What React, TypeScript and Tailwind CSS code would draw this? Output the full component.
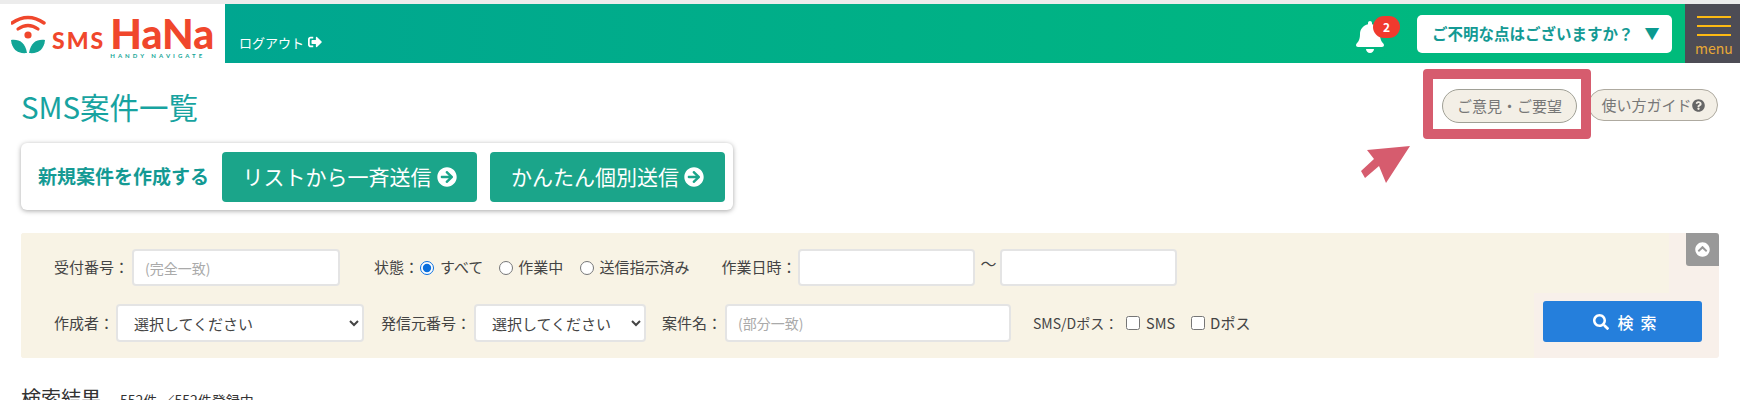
import {
  FaArrowCircleRight,
  FaBell,
  FaChevronCircleUp,
  FaQuestionCircle,
  FaSearch,
  FaSignOutAlt,
} from 'react-icons/fa';

const fontStack = "font-['Noto_Sans_CJK_JP','Noto_Sans',sans-serif]";

function Logo() {
  return (
    <div className="flex h-[59px] w-[225px] shrink-0 items-start bg-white pl-[11px] pt-[11px]">
      <svg width="36" height="40" viewBox="0 0 36 40">
        <path d="M1 8 Q17 -3 33 8" fill="none" stroke="#f0472c" strokeWidth="3.4" strokeLinecap="round" />
        <path d="M7 14 Q17 7 27 14" fill="none" stroke="#f0472c" strokeWidth="3.2" strokeLinecap="round" />
        <circle cx="17" cy="20" r="3.6" fill="#f0472c" />
        <path d="M0 25 C8 24 14 27 16 38 C7 39 1 35 0 25 Z" fill="#12a596" />
        <path d="M34 25 C26 24 20 27 18 38 C27 39 33 35 34 25 Z" fill="#12a596" />
      </svg>
      <div className="ml-[5px] mt-[12px] font-['Lato',sans-serif] text-[23px] font-black leading-[26px] tracking-[2px] text-[#f0472c]">
        SMS
      </div>
      <div className="ml-[5px] flex flex-col">
        <div className="flex h-[37px] items-center font-['Lato',sans-serif] text-[41px] font-black leading-[37px] text-[#f0472c]">
          HaNa
        </div>
        <div className="font-['Lato',sans-serif] text-[6px] font-bold leading-[8px] tracking-[3.05px] text-[#12a596]">
          HANDY NAVIGATE
        </div>
      </div>
    </div>
  );
}

function Header() {
  return (
    <div className="flex h-[59px] items-stretch">
      <Logo />
      <div className="flex flex-1 bg-gradient-to-r from-[#00a690] to-[#00bc7a]">
        <div className="flex items-end pb-[10px] pl-[14px] text-[13px] leading-[20px] text-white">
          ログアウト
          <FaSignOutAlt className="mb-[4px] ml-[4px] h-[14px] w-[14px]" />
        </div>
        <div className="ml-auto flex items-center pr-[13px]">
          <div className="relative mr-[33px] mt-[7px] h-[32px] w-[28px]">
            <FaBell className="h-[32px] w-[28px] text-white" />
            <div className="absolute left-[17px] top-[-5px] flex h-[22px] w-[27px] items-center justify-center rounded-full bg-[#f03a2e] text-[12px] font-bold text-white">
              2
            </div>
          </div>
          <div className="flex h-[38px] w-[255px] items-center rounded-[5px] bg-white pl-[15px] text-[15.5px] font-bold text-[#149a94]">
            ご不明な点はございますか？
            <span className="ml-[11px] text-[15px] text-[#0b9a90]">▼</span>
          </div>
        </div>
        <div className="flex w-[55px] flex-col items-center bg-[#4d4c55] pl-[3px] pt-[12px]">
          <div className="h-[2px] w-[34px] bg-[#fdb913]" />
          <div className="mt-[7px] h-[2px] w-[34px] bg-[#fdb913]" />
          <div className="mt-[7px] h-[2px] w-[34px] bg-[#fdb913]" />
          <div className="mt-[2px] text-[14px] leading-[20px] text-[#e8a836]">menu</div>
        </div>
      </div>
    </div>
  );
}

function TitleRow() {
  return (
    <div className="flex h-[60px] items-start justify-between pl-[21px] pr-[22px] pt-[26px]">
      <h1 className="text-[29.5px] font-normal leading-[34px] text-[#17a3a0]">SMS案件一覧</h1>
      <div className="flex items-start gap-[11px]">
        <div className="flex h-[34px] w-[135px] items-center justify-center rounded-full border-[1.5px] border-[#a0a096] bg-[#f3efe6] text-[15px] text-[#777]">
          ご意見・ご要望
        </div>
        <div className="flex h-[32px] w-[130px] items-center justify-center rounded-full border-[1.5px] border-[#aeaaa0] bg-[#f3efe6] text-[15px] text-[#777]">
          使い方ガイド
          <FaQuestionCircle className="h-[13px] w-[13px] text-[#666]" />
        </div>
      </div>
    </div>
  );
}

function CreateCard() {
  return (
    <div className="ml-[21px] mt-[20px] flex h-[67px] w-[712px] items-center rounded-[6px] bg-white pl-[17px] shadow-[0_1px_5px_rgba(0,0,0,0.35)]">
      <div className="w-[184px] whitespace-nowrap text-[19px] font-bold text-[#149a94]">新規案件を作成する</div>
      <div className="flex h-[50px] w-[255px] items-center justify-center gap-[5px] rounded-[4px] bg-[#1ba58a] text-[21px] text-white">
        リストから一斉送信
        <FaArrowCircleRight className="h-[20px] w-[20px]" />
      </div>
      <div className="ml-[13px] flex h-[50px] w-[235px] items-center justify-center gap-[5px] rounded-[4px] bg-[#1ba58a] text-[21px] text-white">
        かんたん個別送信
        <FaArrowCircleRight className="h-[20px] w-[20px]" />
      </div>
    </div>
  );
}

const fieldClass =
  'h-[37px] rounded-[4px] border-2 border-[#e4e4e4] bg-white pl-[11px] text-[14px] text-[#444] outline-none placeholder:text-[#aaa]';
const selectClass =
  'h-[38px] rounded-[4px] border-2 border-[#e4e4e4] bg-white pl-[12px] text-[15px] text-[#444] outline-none';

function SearchPanel() {
  return (
    <div className="relative ml-[21px] mt-[23px] h-[125px] w-[1698px] overflow-hidden rounded-[3px] bg-[#f8f0ea] text-[15px] text-[#444]">
      <div className="flex h-[60px] w-[1648px] items-center bg-[#f8f3e5] pl-[33px] pt-[9px]">
        <span className="w-[78px]">受付番号：</span>
        <input className={`${fieldClass} w-[208px]`} placeholder="(完全一致)" readOnly />
        <span className="ml-[34px] w-[46px]">状態：</span>
        <label className="flex items-center">
          <input type="radio" name="state" defaultChecked className="h-[14px] w-[14px] accent-[#0b6fdc]" />
          <span className="ml-[6px]">すべて</span>
        </label>
        <label className="ml-[16px] flex items-center">
          <input type="radio" name="state" className="h-[14px] w-[14px]" />
          <span className="ml-[5px]">作業中</span>
        </label>
        <label className="ml-[17px] flex items-center">
          <input type="radio" name="state" className="h-[14px] w-[14px]" />
          <span className="ml-[5px]">送信指示済み</span>
        </label>
        <span className="ml-[32px] w-[77px]">作業日時：</span>
        <input className={`${fieldClass} w-[177px]`} readOnly />
        <span className="mx-[5px] mt-[-10px] w-[15px] text-[16px]">〜</span>
        <input className={`${fieldClass} w-[177px]`} readOnly />
      </div>
      <div className="flex h-[65px]">
        <div className="flex h-full w-[1513px] items-start bg-[#f8f3e5] pl-[33px] pt-[11px]">
          <div className="flex h-[38px] items-center">
            <span className="w-[62px]">作成者：</span>
            <select className={`${selectClass} w-[248px]`} defaultValue="">
              <option value="">選択してください</option>
            </select>
            <span className="ml-[17px] w-[93px]">発信元番号：</span>
            <select className={`${selectClass} w-[172px]`} defaultValue="">
              <option value="">選択してください</option>
            </select>
            <span className="ml-[16px] w-[63px]">案件名：</span>
            <input className={`${fieldClass} h-[38px] w-[286px]`} placeholder="(部分一致)" readOnly />
            <span className="ml-[22px] w-[93px] text-[14px]">SMS/Dポス：</span>
            <label className="flex items-center">
              <input type="checkbox" className="h-[14px] w-[14px]" />
              <span className="ml-[6px] text-[14.5px]">SMS</span>
            </label>
            <label className="ml-[16px] flex items-center">
              <input type="checkbox" className="h-[14px] w-[14px]" />
              <span className="ml-[5px] text-[15px]">Dポス</span>
            </label>
          </div>
        </div>
        <div className="flex flex-1 items-start pl-[9px] pt-[8px]">
          <button className="flex h-[41px] w-[159px] items-center justify-center rounded-[3px] bg-[#257fdc] pl-[12px] text-[16px] font-medium tracking-[7px] text-white">
            <FaSearch className="mr-[8px] h-[16px] w-[16px]" />
            検索
          </button>
        </div>
      </div>
      <div className="absolute right-0 top-0 flex h-[33px] w-[33px] items-center justify-center rounded-bl-[3px] bg-[#999]">
        <FaChevronCircleUp className="h-[15px] w-[15px] text-white" />
      </div>
    </div>
  );
}

function Callout() {
  return (
    <>
      <div className="absolute left-[1423px] top-[69px] h-[70px] w-[168px] rounded-[4px] border-[10px] border-[#d65c6e]" />
      <svg className="absolute left-[1361px] top-[146px]" width="50" height="38" viewBox="0 0 50 38">
        <polygon points="49,0 6,4 13,13 0,25 4,32 18,20 25,37" fill="#d65c6e" />
      </svg>
    </>
  );
}

export default function App() {
  return (
    <div className={`relative h-[400px] w-[1740px] overflow-hidden bg-white ${fontStack}`}>
      <div className="h-[4px] bg-[#ececec]" />
      <Header />
      <TitleRow />
      <CreateCard />
      <SearchPanel />
      <div className="ml-[21px] mt-[25px] flex items-baseline text-[#333]">
        <span className="text-[20px] leading-[30px]">検索結果</span>
        <span className="ml-[19px] text-[14px]">552件 ／552件登録中</span>
      </div>
      <Callout />
    </div>
  );
}
